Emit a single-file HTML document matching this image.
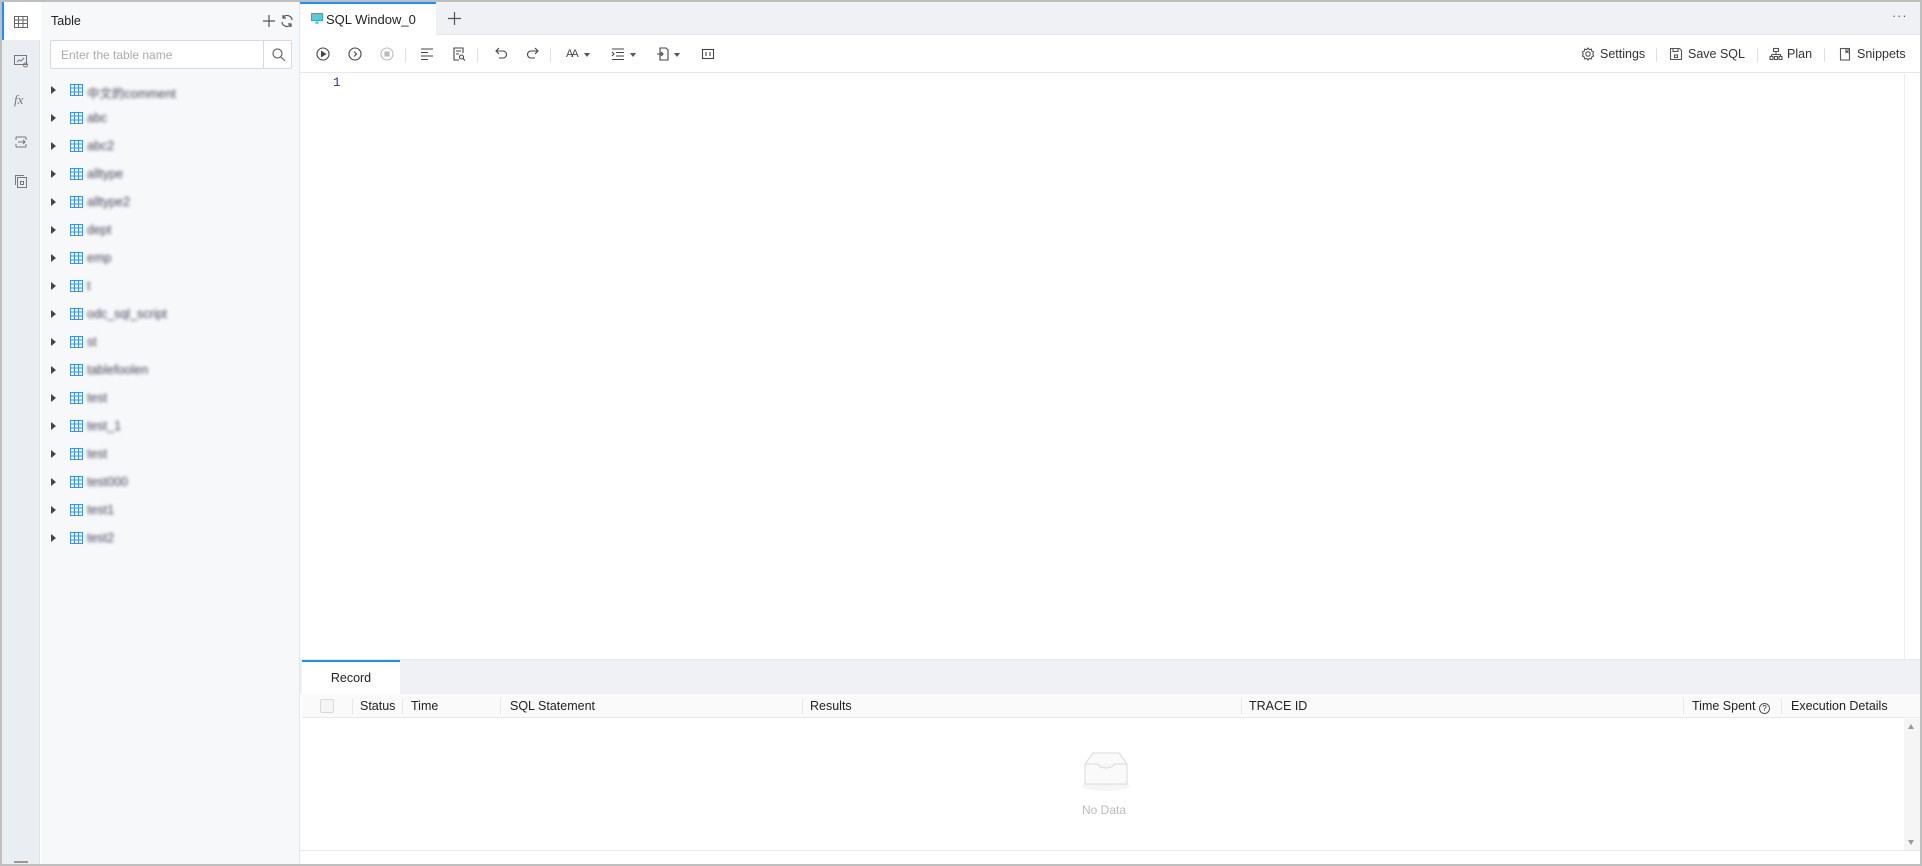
<!DOCTYPE html>
<html><head><meta charset="utf-8"><style>
*{box-sizing:border-box;margin:0;padding:0}
body{width:1922px;height:866px;overflow:hidden;background:#bfbfbf;font-family:"Liberation Sans","Noto Sans CJK SC",sans-serif;font-size:12.5px;color:#333;position:relative}
.abs{position:absolute}
#frame{left:2px;top:2px;width:1918px;height:862px;background:#fff;overflow:hidden}
#iconbar{left:0;top:0;width:38px;height:862px;background:#eaedf2;border-right:1px solid #dde1e8}
#side{left:39px;top:0;width:259px;height:862px;background:#f7f8fa;border-right:1px solid #e3e6eb}
.ic{position:absolute;left:11px;width:16px;height:16px}
.row{position:absolute;left:0;height:20px;width:259px}
.row .tri{position:absolute;left:10px;top:5px;width:0;height:0;border-top:4px solid transparent;border-bottom:4px solid transparent;border-left:5px solid #444}
.row .tb{position:absolute;left:29px;top:3px}
.row .nm{position:absolute;left:46px;top:2px;color:#445;filter:blur(1.6px);font-size:12.5px}
#tabs{left:298px;top:0;width:1620px;height:33px;background:#f0f1f4;border-bottom:1px solid #e6e8ec}
#tb{left:298px;top:34px;width:1620px;height:37px;border-bottom:1px solid #e6e8ec;background:#fff}
.t{position:absolute;top:11px}
.sep{position:absolute;top:12px;width:1px;height:14px;background:#e0e0e0}
.col{position:absolute;top:0;height:24px;line-height:24px;font-size:12.5px;color:#222}
.csep{position:absolute;top:4px;width:1px;height:16px;background:#e8e8e8}
</style></head><body>
<div id="frame" class="abs">
 <div id="iconbar" class="abs">
  <div class="abs" style="left:0;top:0;width:39px;height:38px;background:#fff;border-left:2px solid #1890ff"></div>
  <svg class="ic" style="top:12px" viewBox="0 0 16 16" fill="none" stroke="#666" stroke-width="1"><rect x="1.5" y="2.5" width="13" height="11"/><path d="M1.5 6h13M1.5 9.5h13M5.5 2.5v11M10 2.5v11"/></svg>
  <svg class="ic" style="top:51px" viewBox="0 0 16 16" fill="none" stroke="#777" stroke-width="1"><rect x="1.5" y="2.5" width="12" height="9"/><path d="M4 9l2-2 2 1 3-3"/><circle cx="12.5" cy="12" r="2"/></svg>
  <div class="abs" style="left:12px;top:90px;font-style:italic;color:#777;font-family:'Liberation Serif',serif;font-size:13px">fx</div>
  <svg class="ic" style="top:132px" viewBox="0 0 16 16" fill="none" stroke="#777" stroke-width="1"><path d="M3 3h10M3 13h10M3 3v3M13 3v3M3 13v-3M13 13v-3M5 8h7M10 6l2 2-2 2"/></svg>
  <svg class="ic" style="top:171px" viewBox="0 0 16 16" fill="none" stroke="#777" stroke-width="1"><rect x="4.5" y="4.5" width="9" height="10"/><path d="M2.5 12V2.5H11"/><rect x="7.5" y="8.5" width="3" height="3"/></svg>
  <div class="abs" style="left:12px;top:859px;width:14px;height:2px;background:#999"></div>
 </div>
 <div id="side" class="abs">
  <div class="abs" style="left:10px;top:12px;font-size:12.5px;color:#222">Table</div>
  <svg class="abs" style="left:221px;top:12px" width="14" height="14" viewBox="0 0 14 14" stroke="#555" stroke-width="1.2"><path d="M7 1v12M1 7h12"/></svg>
  <svg class="abs" style="left:239px;top:12px" width="14" height="14" viewBox="0 0 14 14" fill="none" stroke="#555" stroke-width="1.2"><path d="M12 6A5 5 0 0 0 3 3.5M2 8a5 5 0 0 0 9 2.5M3 1v3h3M11 13v-3H8"/></svg>
  <div class="abs" style="left:9px;top:38px;width:242px;height:29px;background:#fff;border:1px solid #d9d9d9;border-radius:2px">
   <div class="abs" style="left:10px;top:7px;color:#aaa;font-size:12px">Enter the table name</div>
   <div class="abs" style="left:212px;top:0;width:1px;height:27px;background:#d9d9d9"></div>
   <svg class="abs" style="left:220px;top:6px" width="15" height="15" viewBox="0 0 15 15" fill="none" stroke="#666" stroke-width="1.2"><circle cx="6.5" cy="6.5" r="4.5"/><path d="M10 10l4 4"/></svg>
  </div>
  <div id="rows"></div>
 </div>
 <div id="tabs" class="abs">
  <div class="abs" style="left:0;top:0;width:136px;height:34px;background:#fff;border-top:2px solid #1890ff"></div>
  <svg class="abs" style="left:11px;top:11px" width="12" height="11" viewBox="0 0 12 11"><rect x="0.5" y="0.5" width="11" height="7" fill="#5ec8d8" stroke="#3ab" stroke-width="1"/><path d="M4 10h4M6 8v2" stroke="#3ab"/></svg>
  <div class="abs" style="left:26px;top:10px;font-size:13px;color:#222">SQL Window_0</div>
  <svg class="abs" style="left:148px;top:10px" width="13" height="13" viewBox="0 0 13 13" stroke="#555" stroke-width="1.2"><path d="M6.5 0v13M0 6.5h13"/></svg>
  <div class="abs" style="left:1592px;top:7px;color:#555;letter-spacing:1px">···</div>
 </div>
 <div id="tb" class="abs">
  <svg class="t" style="left:16px" width="14" height="14" viewBox="0 0 14 14" fill="none" stroke="#444" stroke-width="1.1"><circle cx="7" cy="7" r="6"/><path d="M5.5 4.5v5l4-2.5z" fill="#444"/></svg>
  <svg class="t" style="left:48px" width="14" height="14" viewBox="0 0 14 14" fill="none" stroke="#444" stroke-width="1.1"><circle cx="7" cy="7" r="6"/><path d="M6 4.5l2.5 2.5L6 9.5"/></svg>
  <svg class="t" style="left:80px" width="14" height="14" viewBox="0 0 14 14" fill="none" stroke="#bbb" stroke-width="1.1"><circle cx="7" cy="7" r="6"/><rect x="5" y="5" width="4" height="4" fill="#bbb"/></svg>
  <div class="sep" style="left:105px"></div>
  <svg class="t" style="left:120px" width="14" height="14" viewBox="0 0 14 14" stroke="#444" stroke-width="1.1"><path d="M1 2h12M1 5.5h7M1 9h12M1 12.5h7"/></svg>
  <svg class="t" style="left:152px" width="14" height="14" viewBox="0 0 14 14" fill="none" stroke="#444" stroke-width="1.1"><path d="M11 6V1H2v12h5M4 4h5M4 7h3"/><circle cx="9.5" cy="10" r="2"/><path d="M11 11.5l2 2"/></svg>
  <div class="sep" style="left:177px"></div>
  <svg class="t" style="left:194px" width="14" height="14" viewBox="0 0 14 14" fill="none" stroke="#444" stroke-width="1.1"><path d="M3 4h6a3.5 3.5 0 0 1 0 7H5M5 1L2 4l3 3"/></svg>
  <svg class="t" style="left:226px" width="14" height="14" viewBox="0 0 14 14" fill="none" stroke="#444" stroke-width="1.1"><path d="M11 4H5a3.5 3.5 0 0 0 0 7h4M9 1l3 3-3 3"/></svg>
  <div class="sep" style="left:250px"></div>
  <div class="t" style="left:266px;top:12px;font-size:11px;color:#444;letter-spacing:-2px">AA</div>
  <div class="t" style="left:284px;top:17px;border-left:3px solid transparent;border-right:3px solid transparent;border-top:4px solid #555"></div>
  <svg class="t" style="left:311px" width="14" height="14" viewBox="0 0 14 14" fill="none" stroke="#444" stroke-width="1.1"><path d="M1 2h12M5 5.5h8M5 9h8M1 12.5h12M1 5l2 2-2 2"/></svg>
  <div class="t" style="left:330px;top:17px;border-left:3px solid transparent;border-right:3px solid transparent;border-top:4px solid #555"></div>
  <svg class="t" style="left:356px" width="14" height="14" viewBox="0 0 14 14" fill="none" stroke="#444" stroke-width="1.1"><path d="M4 1h6l2 2v10H4zM1 7h6M5 5l2 2-2 2"/></svg>
  <div class="t" style="left:374px;top:17px;border-left:3px solid transparent;border-right:3px solid transparent;border-top:4px solid #555"></div>
  <svg class="t" style="left:401px" width="14" height="14" viewBox="0 0 14 14" fill="none" stroke="#444" stroke-width="1.1"><rect x="1.5" y="2.5" width="11" height="9"/><path d="M5 5v4M9 5v4"/></svg>
  <svg class="t" style="left:1281px" width="14" height="14" viewBox="0 0 14 14" fill="none" stroke="#555" stroke-width="1.1"><circle cx="7" cy="7" r="2.2"/><path d="M7 1l1.3 1.6 2-.5.5 2L12.6 5l-.8 2 .8 2-1.8.9-.5 2-2-.5L7 13l-1.3-1.6-2 .5-.5-2L1.4 9l.8-2-.8-2 1.8-.9.5-2 2 .5z"/></svg>
  <div class="t" style="left:1300px;top:11px;color:#333">Settings</div>
  <div class="sep" style="left:1356px"></div>
  <svg class="t" style="left:1369px" width="14" height="14" viewBox="0 0 14 14" fill="none" stroke="#555" stroke-width="1.1"><path d="M1.5 1.5h9l2 2v9h-11z M4 1.5v3h5v-3"/><rect x="5.5" y="8" width="3" height="2.5"/></svg>
  <div class="t" style="left:1388px;top:11px;color:#333">Save SQL</div>
  <div class="sep" style="left:1457px"></div>
  <svg class="t" style="left:1469px" width="14" height="14" viewBox="0 0 14 14" fill="none" stroke="#555" stroke-width="1.1"><rect x="4.5" y="1.5" width="5" height="3"/><path d="M7 4.5v3M2.5 7.5h9v2M2.5 7.5v2"/><rect x="1" y="9.5" width="3" height="3"/><rect x="5.5" y="9.5" width="3" height="3"/><rect x="10" y="9.5" width="3" height="3"/></svg>
  <div class="t" style="left:1487px;top:11px;color:#333">Plan</div>
  <div class="sep" style="left:1524px"></div>
  <svg class="t" style="left:1538px" width="14" height="14" viewBox="0 0 14 14" fill="none" stroke="#555" stroke-width="1.1"><rect x="2.5" y="1.5" width="9" height="11.5"/><path d="M8 1.5v4l1-1 1 1v-4"/></svg>
  <div class="t" style="left:1557px;top:11px;color:#333">Snippets</div>
 </div>
 <div class="abs" style="left:331px;top:74px;color:#1a3a8a;font-family:'Liberation Mono',monospace;font-size:12.5px">1</div>
 <div class="abs" style="left:1902px;top:72px;width:1px;height:586px;background:#ececec"></div>
 <div class="abs" style="left:298px;top:657px;width:1620px;height:35px;background:#f0f1f4;border-top:1px solid #e6e8ec"></div>
 <div class="abs" style="left:300px;top:658px;width:98px;height:34px;background:#fff;border-top:2px solid #1890ff;text-align:center;line-height:32px;color:#222">Record</div>
 <div class="abs" style="left:300px;top:692px;width:1618px;height:24px;background:#fafafa;border-bottom:1px solid #e8e8e8">
  <div class="abs" style="left:18px;top:5px;width:14px;height:14px;border:1px solid #d9d9d9;background:#f5f5f5;border-radius:2px"></div>
  <div class="csep" style="left:50px"></div><div class="col" style="left:58px">Status</div>
  <div class="csep" style="left:100px"></div><div class="col" style="left:109px">Time</div>
  <div class="csep" style="left:198px"></div><div class="col" style="left:208px">SQL Statement</div>
  <div class="csep" style="left:500px"></div><div class="col" style="left:508px">Results</div>
  <div class="csep" style="left:939px"></div><div class="col" style="left:947px">TRACE ID</div>
  <div class="csep" style="left:1381px"></div><div class="col" style="left:1390px">Time Spent <span style="display:inline-block;width:11px;height:11px;border:1px solid #555;border-radius:50%;font-size:8px;line-height:9px;text-align:center;vertical-align:-1px">?</span></div>
  <div class="csep" style="left:1479px"></div><div class="col" style="left:1489px">Execution Details</div>
 </div>
 <div class="abs" style="left:1902px;top:717px;width:16px;height:131px;background:#f5f5f5"></div>
 <div class="abs" style="left:1906px;top:722px;border-left:3px solid transparent;border-right:3px solid transparent;border-bottom:5px solid #999"></div>
 <div class="abs" style="left:1906px;top:838px;border-left:3px solid transparent;border-right:3px solid transparent;border-top:5px solid #999"></div>
 <svg class="abs" style="left:1074px;top:748px" width="60" height="42" viewBox="0 0 60 42"><ellipse cx="30" cy="36" rx="24" ry="5" fill="#f5f5f5"/><path d="M9 14l8-11h26l8 11v20H9z" fill="#fafafa" stroke="#d9d9d9"/><path d="M9 14h13a8 4 0 0 0 16 0h13" fill="#f5f5f5" stroke="#d9d9d9"/></svg>
 <div class="abs" style="left:1080px;top:801px;color:#bbb;font-size:12px">No Data</div>
 <div class="abs" style="left:298px;top:848px;width:1620px;height:1px;background:#e8e8e8"></div>
</div>
<script>
var names=["中文的comment","abc","abc2","alltype","alltype2","dept","emp","t","odc_sql_script","st","tablefoolen","test","test_1","test","test000","test1","test2"];
var h="";names.forEach(function(n,i){var y=79+i*28;h+='<div class="row" style="top:'+y+'px"><div class="tri"></div><svg class="tb" width="13" height="12" viewBox="0 0 13 12" fill="none" stroke="#3b8ff0" stroke-width="1"><rect x="0.5" y="0.5" width="12" height="11"/><path d="M0.5 4h12M0.5 8h12M4.5 0.5v11M8.5 0.5v11"/></svg><div class="nm">'+n+'</div></div>';});
document.getElementById("rows").innerHTML=h;
</script>
</body></html>
